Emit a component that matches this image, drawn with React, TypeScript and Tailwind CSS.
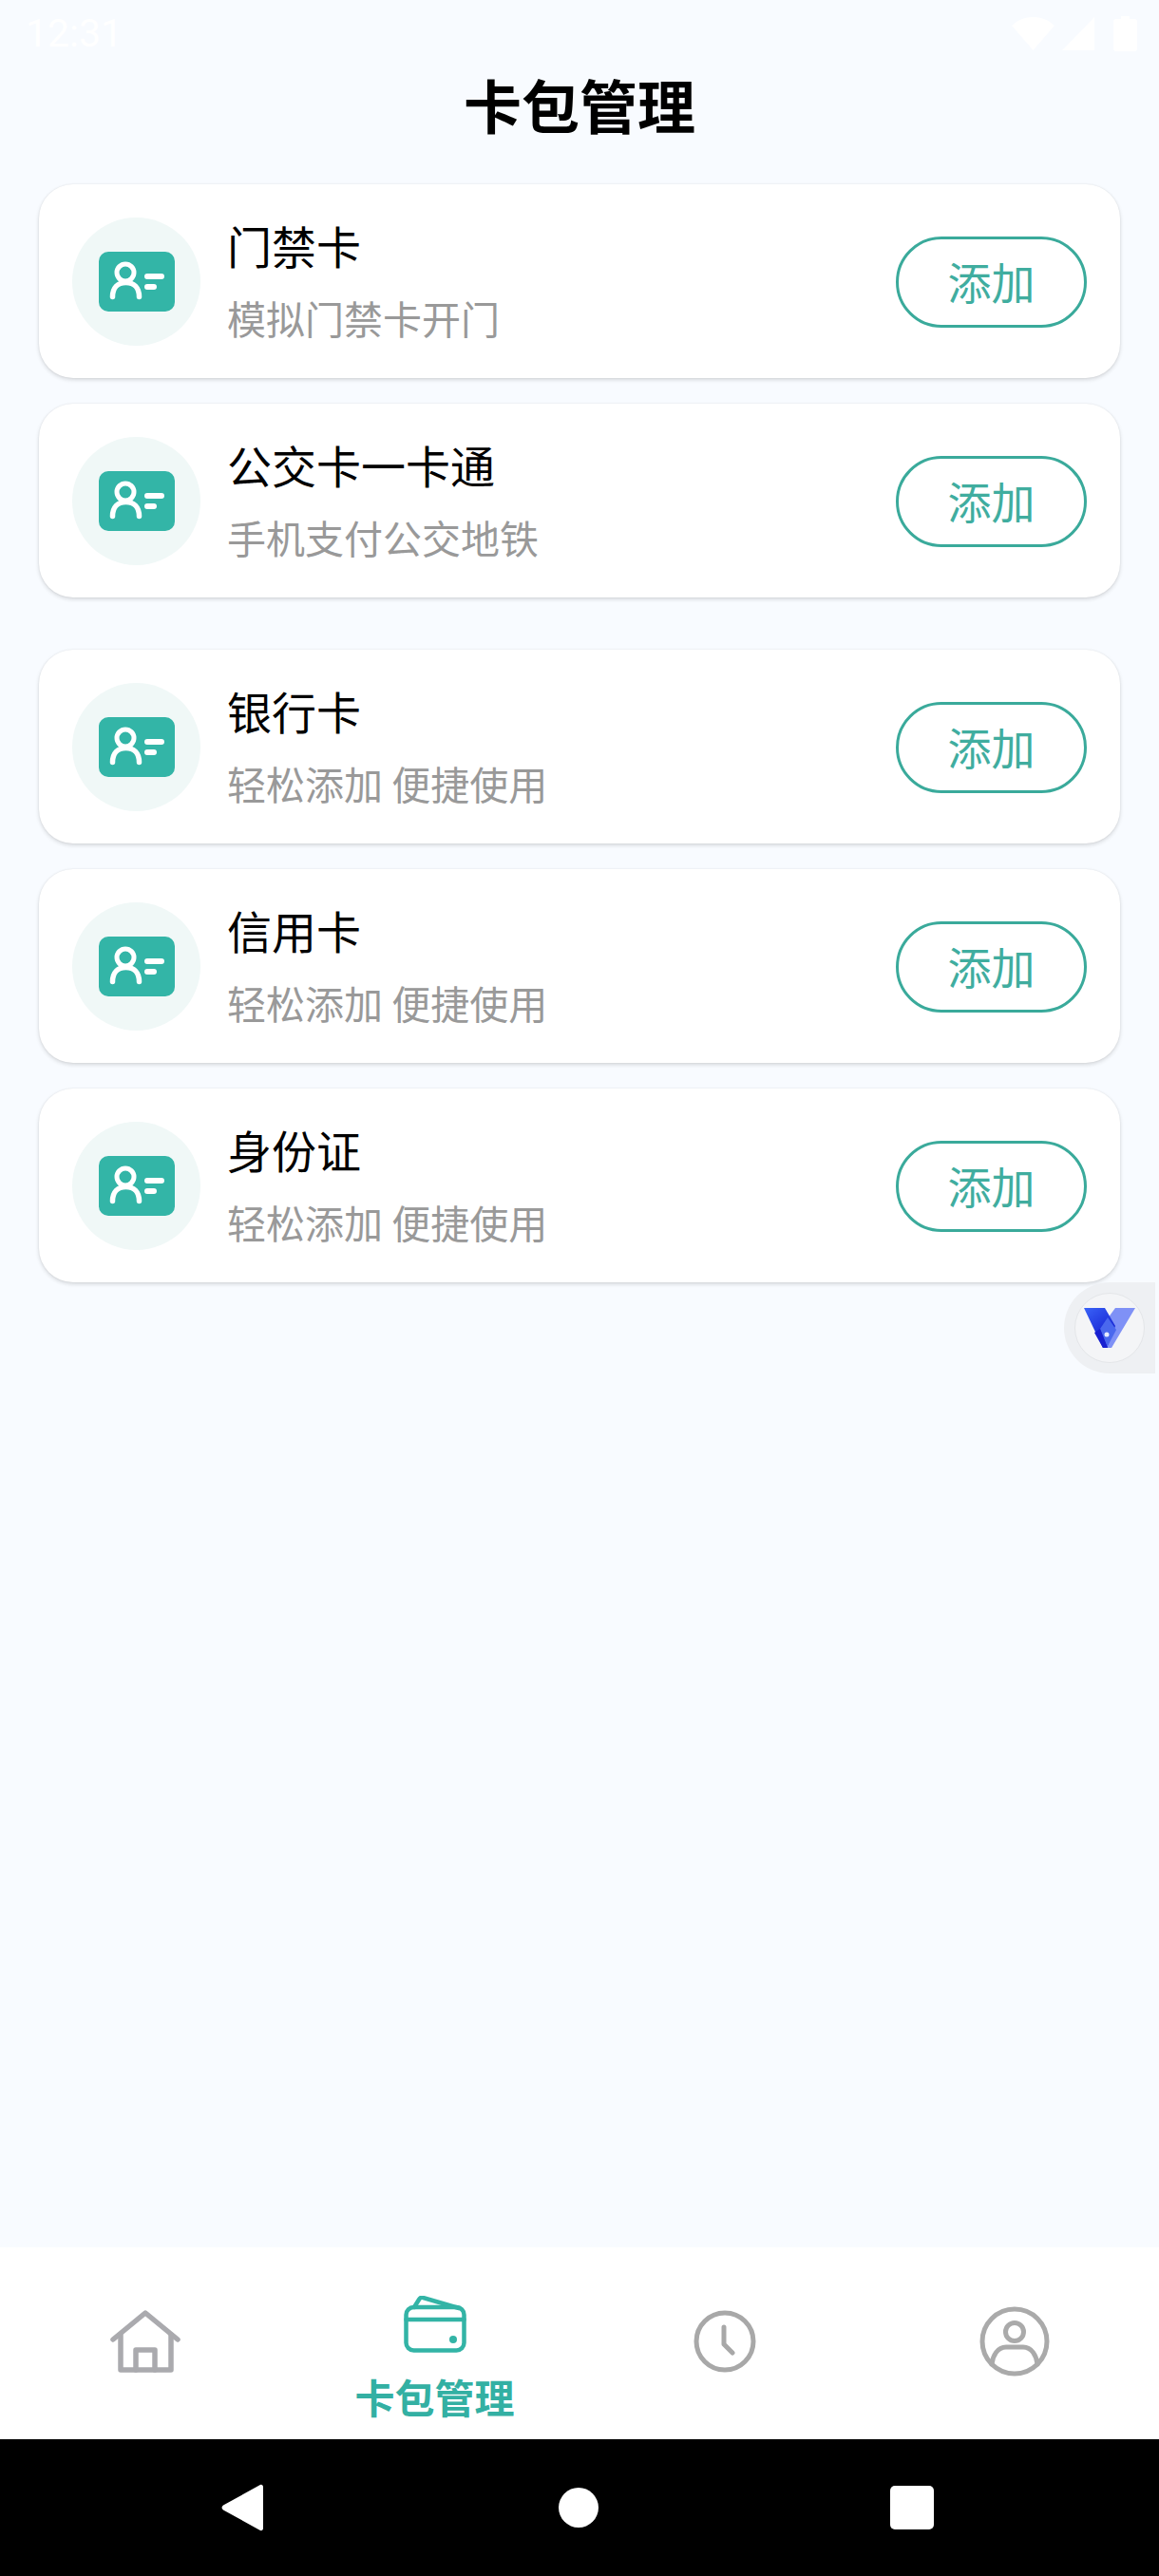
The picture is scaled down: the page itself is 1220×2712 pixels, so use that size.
const cjk = "font-['Noto_Sans_CJK_SC','Noto_Sans',sans-serif]";

function CardIcon() {
  return (
    <svg width="80" height="63" viewBox="0 0 80 63" fill="none">
      <rect width="80" height="63" rx="10" fill="#33b5a7" />
      <circle cx="28" cy="22" r="9" stroke="#fff" strokeWidth="5" />
      <path d="M14.500 47.500C14.500 38 20 32.500 28.500 32.500S42.500 38 42.500 47.500" stroke="#fff" strokeWidth="5.500" strokeLinecap="round" />
      <path d="M51 26h15M51 37h7" stroke="#fff" strokeWidth="6" strokeLinecap="round" />
    </svg>
  );
}

function CardRow({ title, desc }: { title: string; desc: string }) {
  return (
    <div className="flex h-[204px] items-center rounded-[36px] bg-white px-[35px] shadow-[0_2px_4px_rgba(0,0,0,0.14),0_0_2px_rgba(0,0,0,0.08)]">
      <div className="flex h-[135px] w-[135px] shrink-0 items-center justify-center rounded-full bg-[#f0f8f7]">
        <CardIcon />
      </div>
      <div className="ml-[28px] flex-1 pb-[3px]">
        <div className="text-[47px] leading-[62px] text-black">{title}</div>
        <div className="mt-[17px] text-[41px] leading-[56px] text-[#999999]">{desc}</div>
      </div>
      <button className="mt-[2px] h-[96px] w-[201px] rounded-full border-[3px] border-[#3aaa9b] pb-[3px] text-[46px] text-[#40ad9f]">
        添加
      </button>
    </div>
  );
}

function HomeIcon() {
  return (
    <svg width="74" height="66" viewBox="0 0 74 66" fill="none" stroke="#aaaaae" strokeWidth="5.500" strokeLinecap="round" strokeLinejoin="round">
      <path d="M3 31 37 3l34 28" />
      <path d="M11 26v37h53V26" />
      <path d="M27 63V42h20v21" />
    </svg>
  );
}

function WalletIcon() {
  return (
    <svg width="66" height="60" viewBox="0 0 66 60" fill="none" stroke="#33b4a6" strokeWidth="4.500" strokeLinecap="round" strokeLinejoin="round">
      <rect x="2.500" y="12" width="61" height="45.500" rx="8" />
      <path d="M2.500 25h61" />
      <path d="M11 12l5-8c1-2 2.500-2.500 4.500-2L58 13" />
      <circle cx="52" cy="46" r="4" fill="#33b4a6" stroke="none" />
    </svg>
  );
}

function ClockIcon() {
  return (
    <svg width="66" height="66" viewBox="0 0 66 66" fill="none" stroke="#a8a8a8" strokeWidth="5" strokeLinecap="round" strokeLinejoin="round">
      <circle cx="33" cy="33" r="30" />
      <path d="M32 18v18l9 9" />
    </svg>
  );
}

function UserIcon() {
  return (
    <svg width="74" height="74" viewBox="0 0 74 74" fill="none" stroke="#aaaaaa" strokeWidth="5" strokeLinecap="round" strokeLinejoin="round">
      <circle cx="37" cy="37" r="34" />
      <circle cx="37" cy="27" r="9.500" />
      <path d="M13 61c1-9 6-18 15-18h18c9 0 14 9 15 18" />
    </svg>
  );
}

function FloatLogo() {
  return (
    <svg width="54" height="42" viewBox="0 0 54 42" fill="none">
      <defs>
        <linearGradient id="logoLeft" x1="0" y1="0" x2="0.6" y2="1">
          <stop offset="0" stopColor="#3a63f7" />
          <stop offset="1" stopColor="#0f17cc" />
        </linearGradient>
      </defs>
      <path d="M33 0h21L29 42h-5l3-20-2-11L33 0Z" fill="#7f91f6" />
      <path d="M0 0h22l11 19-9 23h-4L0 0Z" fill="url(#logoLeft)" />
      <path d="M25 10l9 13-9 17h-1l-7-18 8-12Z" fill="#4a68ee" />
      <path d="M17 22l8 20h-5L11 26l6-4Z" fill="#1820d0" />
      <circle cx="24" cy="28" r="2.500" fill="#e8ecff" />
    </svg>
  );
}

export default function App() {
  return (
    <div className={`relative flex h-[2712px] w-[1220px] flex-col overflow-hidden bg-[#f8fbff] ${cjk}`}>
      {/* status bar, white on a nearly white page */}
      <div className="flex h-[70px] items-center justify-between pl-[27px] pr-[23px] text-white">
        <span className="font-['Roboto',sans-serif] text-[41px] leading-none">12:31</span>
        <div className="flex items-center">
          <svg width="45" height="35" viewBox="0 0 45 35" fill="#fff"><path d="M22.500 35 0 9C12-3 33-3 45 9L22.500 35Z" /></svg>
          <svg className="ml-[8px]" width="34" height="35" viewBox="0 0 34 35" fill="#fff"><path d="M34 0v35H0L34 0Z" /></svg>
          <svg className="ml-[20px]" width="25" height="37" viewBox="0 0 25 37" fill="#fff"><path d="M8 0h9v3h5a3 3 0 0 1 3 3v28a3 3 0 0 1-3 3H3a3 3 0 0 1-3-3V6a3 3 0 0 1 3-3h5V0Z" /></svg>
        </div>
      </div>

      <h1 className="mt-[-3px] text-center text-[61px] font-bold leading-[86px] text-black">卡包管理</h1>

      <div className="mt-[41px] flex flex-1 flex-col px-[41px]">
        <div className="flex flex-col gap-[27px]">
          <CardRow title="门禁卡" desc="模拟门禁卡开门" />
          <CardRow title="公交卡一卡通" desc="手机支付公交地铁" />
        </div>
        <div className="mt-[55px] flex flex-col gap-[27px]">
          <CardRow title="银行卡" desc="轻松添加 便捷使用" />
          <CardRow title="信用卡" desc="轻松添加 便捷使用" />
          <CardRow title="身份证" desc="轻松添加 便捷使用" />
        </div>
      </div>

      {/* floating assistant button */}
      <div className="absolute left-[1120px] top-[1350px] flex h-[96px] w-[96px] items-center rounded-l-[48px] bg-[#eef0f3] pl-[11px]">
        <div className="flex h-[74px] w-[74px] items-center justify-center rounded-full border border-[#e4e6e9] bg-[#f4f5f7]">
          <FloatLogo />
        </div>
      </div>

      <nav className="grid h-[202px] grid-cols-4 bg-white">
        <div className="flex items-start justify-center pt-[66px]"><HomeIcon /></div>
        <div className="flex flex-col items-center pt-[51px]">
          <WalletIcon />
          <span className="mt-[20px] text-[42px] font-bold leading-[52px] text-[#33b0a3]">卡包管理</span>
        </div>
        <div className="flex items-start justify-center pt-[66px]"><ClockIcon /></div>
        <div className="flex items-start justify-center pt-[62px]"><UserIcon /></div>
      </nav>

      {/* android nav bar */}
      <div className="h-[144px] bg-black">
        <div className="flex h-full items-center">
          <svg className="ml-[233px]" width="44" height="50" viewBox="0 0 44 50" fill="#fff"><path d="M40 1.500c2-1.500 4-.5 4 2v43c0 2.500-2 3.500-4 2L2 27.500c-2-1.500-2-3.500 0-5L40 1.500Z" /></svg>
          <div className="ml-[311px] h-[42px] w-[42px] rounded-full bg-white" />
          <div className="ml-[307px] h-[46px] w-[46px] rounded-[5px] bg-white" />
        </div>
      </div>
    </div>
  );
}
